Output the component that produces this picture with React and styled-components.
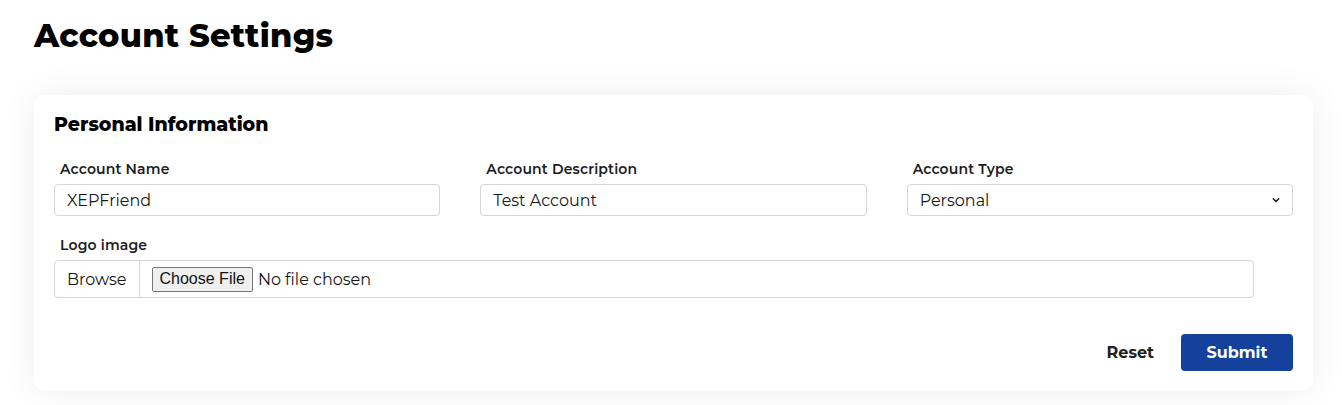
import React, { useState } from 'react';
import styled, { createGlobalStyle } from 'styled-components';

const FONT = `"Montserrat", Inter, "DejaVu Sans", sans-serif`;

const GlobalStyle = createGlobalStyle`
  * { box-sizing: border-box; }
  body {
    margin: 0;
    background: #ffffff;
    font-family: ${FONT};
    color: #161616;
  }
`;

const App = () => {
  const [name, setName] = useState('XEPFriend');
  const [description, setDescription] = useState('Test Account');
  const [type, setType] = useState('personal');

  const handleReset = () => {
    setName('');
    setDescription('');
    setType('personal');
  };

  return (
    <>
      <GlobalStyle />
      <Page>
        <Title>Account Settings</Title>
        <Card onSubmit={(e) => e.preventDefault()}>
          <SectionTitle>Personal Information</SectionTitle>
          <FieldGrid>
            <Field>
              <Label htmlFor="account-name">Account Name</Label>
              <TextInput id="account-name" value={name} onChange={(e) => setName(e.target.value)} />
            </Field>
            <Field>
              <Label htmlFor="account-desc">Account Description</Label>
              <TextInput id="account-desc" value={description} onChange={(e) => setDescription(e.target.value)} />
            </Field>
            <Field>
              <Label htmlFor="account-type">Account Type</Label>
              <SelectWrap>
                <Select id="account-type" value={type} onChange={(e) => setType(e.target.value)}>
                  <option value="personal">Personal</option>
                  <option value="business">Business</option>
                </Select>
                <Chevron viewBox="0 0 16 16" aria-hidden="true">
                  <path d="M4.5 6.5 8 10l3.5-3.5" fill="none" stroke="#222" strokeWidth="2" strokeLinecap="round" strokeLinejoin="round" />
                </Chevron>
              </SelectWrap>
            </Field>
          </FieldGrid>

          <LogoField>
            <Label htmlFor="logo">Logo image</Label>
            <InputGroup>
              <Addon>Browse</Addon>
              <FileBox>
                <FileInput id="logo" type="file" />
              </FileBox>
            </InputGroup>
          </LogoField>

          <Actions>
            <ResetButton type="button" onClick={handleReset}>Reset</ResetButton>
            <SubmitButton type="submit">Submit</SubmitButton>
          </Actions>
        </Card>
      </Page>
    </>
  );
};

const Page = styled.div`
  padding: 15px 29px 14px 34px;
`;

const Title = styled.h1`
  margin: 0 0 38px;
  font-size: 32px;
  line-height: 42px;
  font-weight: 800;
  color: #000;
  letter-spacing: 0.3px;
`;

const Card = styled.form`
  background: #fff;
  border-radius: 10px;
  box-shadow: 0 0 36px rgba(20, 30, 50, 0.07);
  padding: 16px 20px 20px;
`;

const SectionTitle = styled.h2`
  margin: 0 0 21px;
  font-size: 19px;
  line-height: 28px;
  font-weight: 800;
  color: #000;
`;

const FieldGrid = styled.div`
  display: grid;
  grid-template-columns: repeat(3, 1fr);
  column-gap: 40px;
`;

const Field = styled.div`
  display: flex;
  flex-direction: column;
  gap: 6px;
`;

const Label = styled.label`
  padding-left: 6px;
  font-size: 14px;
  line-height: 18px;
  font-weight: 600;
  color: #1c1c1c;
  letter-spacing: 0.15px;
`;

const TextInput = styled.input`
  height: 32px;
  padding: 0 12px;
  border: 1px solid #d4d6dc;
  border-radius: 4px;
  font-family: ${FONT};
  font-size: 16px;
  color: #161616;
  background: #fff;

  &:focus {
    outline: none;
    border-color: #13419c;
  }
`;

const SelectWrap = styled.div`
  position: relative;
`;

const Select = styled.select`
  width: 100%;
  height: 32px;
  padding: 0 32px 0 12px;
  border: 1px solid #d4d6dc;
  border-radius: 4px;
  font-family: ${FONT};
  font-size: 16px;
  color: #161616;
  background: #fff;
  appearance: none;

  &:focus {
    outline: none;
    border-color: #13419c;
  }
`;

const Chevron = styled.svg`
  position: absolute;
  right: 11px;
  top: 10px;
  width: 12px;
  height: 12px;
  pointer-events: none;
`;

const LogoField = styled(Field)`
  margin-top: 20px;
  margin-right: 39px;
`;

const InputGroup = styled.div`
  display: flex;
  height: 38px;
  border: 1px solid #d4d6dc;
  border-radius: 4px;
  overflow: hidden;
`;

const Addon = styled.span`
  display: flex;
  align-items: center;
  padding: 0 12px;
  border-right: 1px solid #d4d6dc;
  font-size: 16px;
  color: #161616;
`;

const FileBox = styled.div`
  flex: 1;
  display: flex;
  align-items: center;
  padding-left: 12px;
`;

const FileInput = styled.input`
  font-family: ${FONT};
  font-size: 16px;
  color: #161616;

  &::file-selector-button {
    margin-right: 5px;
    padding: 1px 7px;
    height: 25px;
    font-family: "Liberation Sans", Arial, sans-serif;
    font-size: 16px;
    color: #111;
    background: #efefef;
    border: 1px solid #767676;
    border-radius: 2px;
  }
`;

const Actions = styled.div`
  display: flex;
  justify-content: flex-end;
  align-items: center;
  gap: 15px;
  margin-top: 36px;
`;

const ResetButton = styled.button`
  background: none;
  border: none;
  padding: 8px 12px;
  font-family: ${FONT};
  font-size: 16px;
  font-weight: 700;
  color: #222;
  cursor: pointer;
`;

const SubmitButton = styled.button`
  width: 112px;
  height: 37px;
  background: #13419c;
  border: none;
  border-radius: 4px;
  font-family: ${FONT};
  font-size: 16px;
  font-weight: 700;
  color: #fff;
  cursor: pointer;

  &:hover {
    background: #0f3785;
  }
`;

export default App;
